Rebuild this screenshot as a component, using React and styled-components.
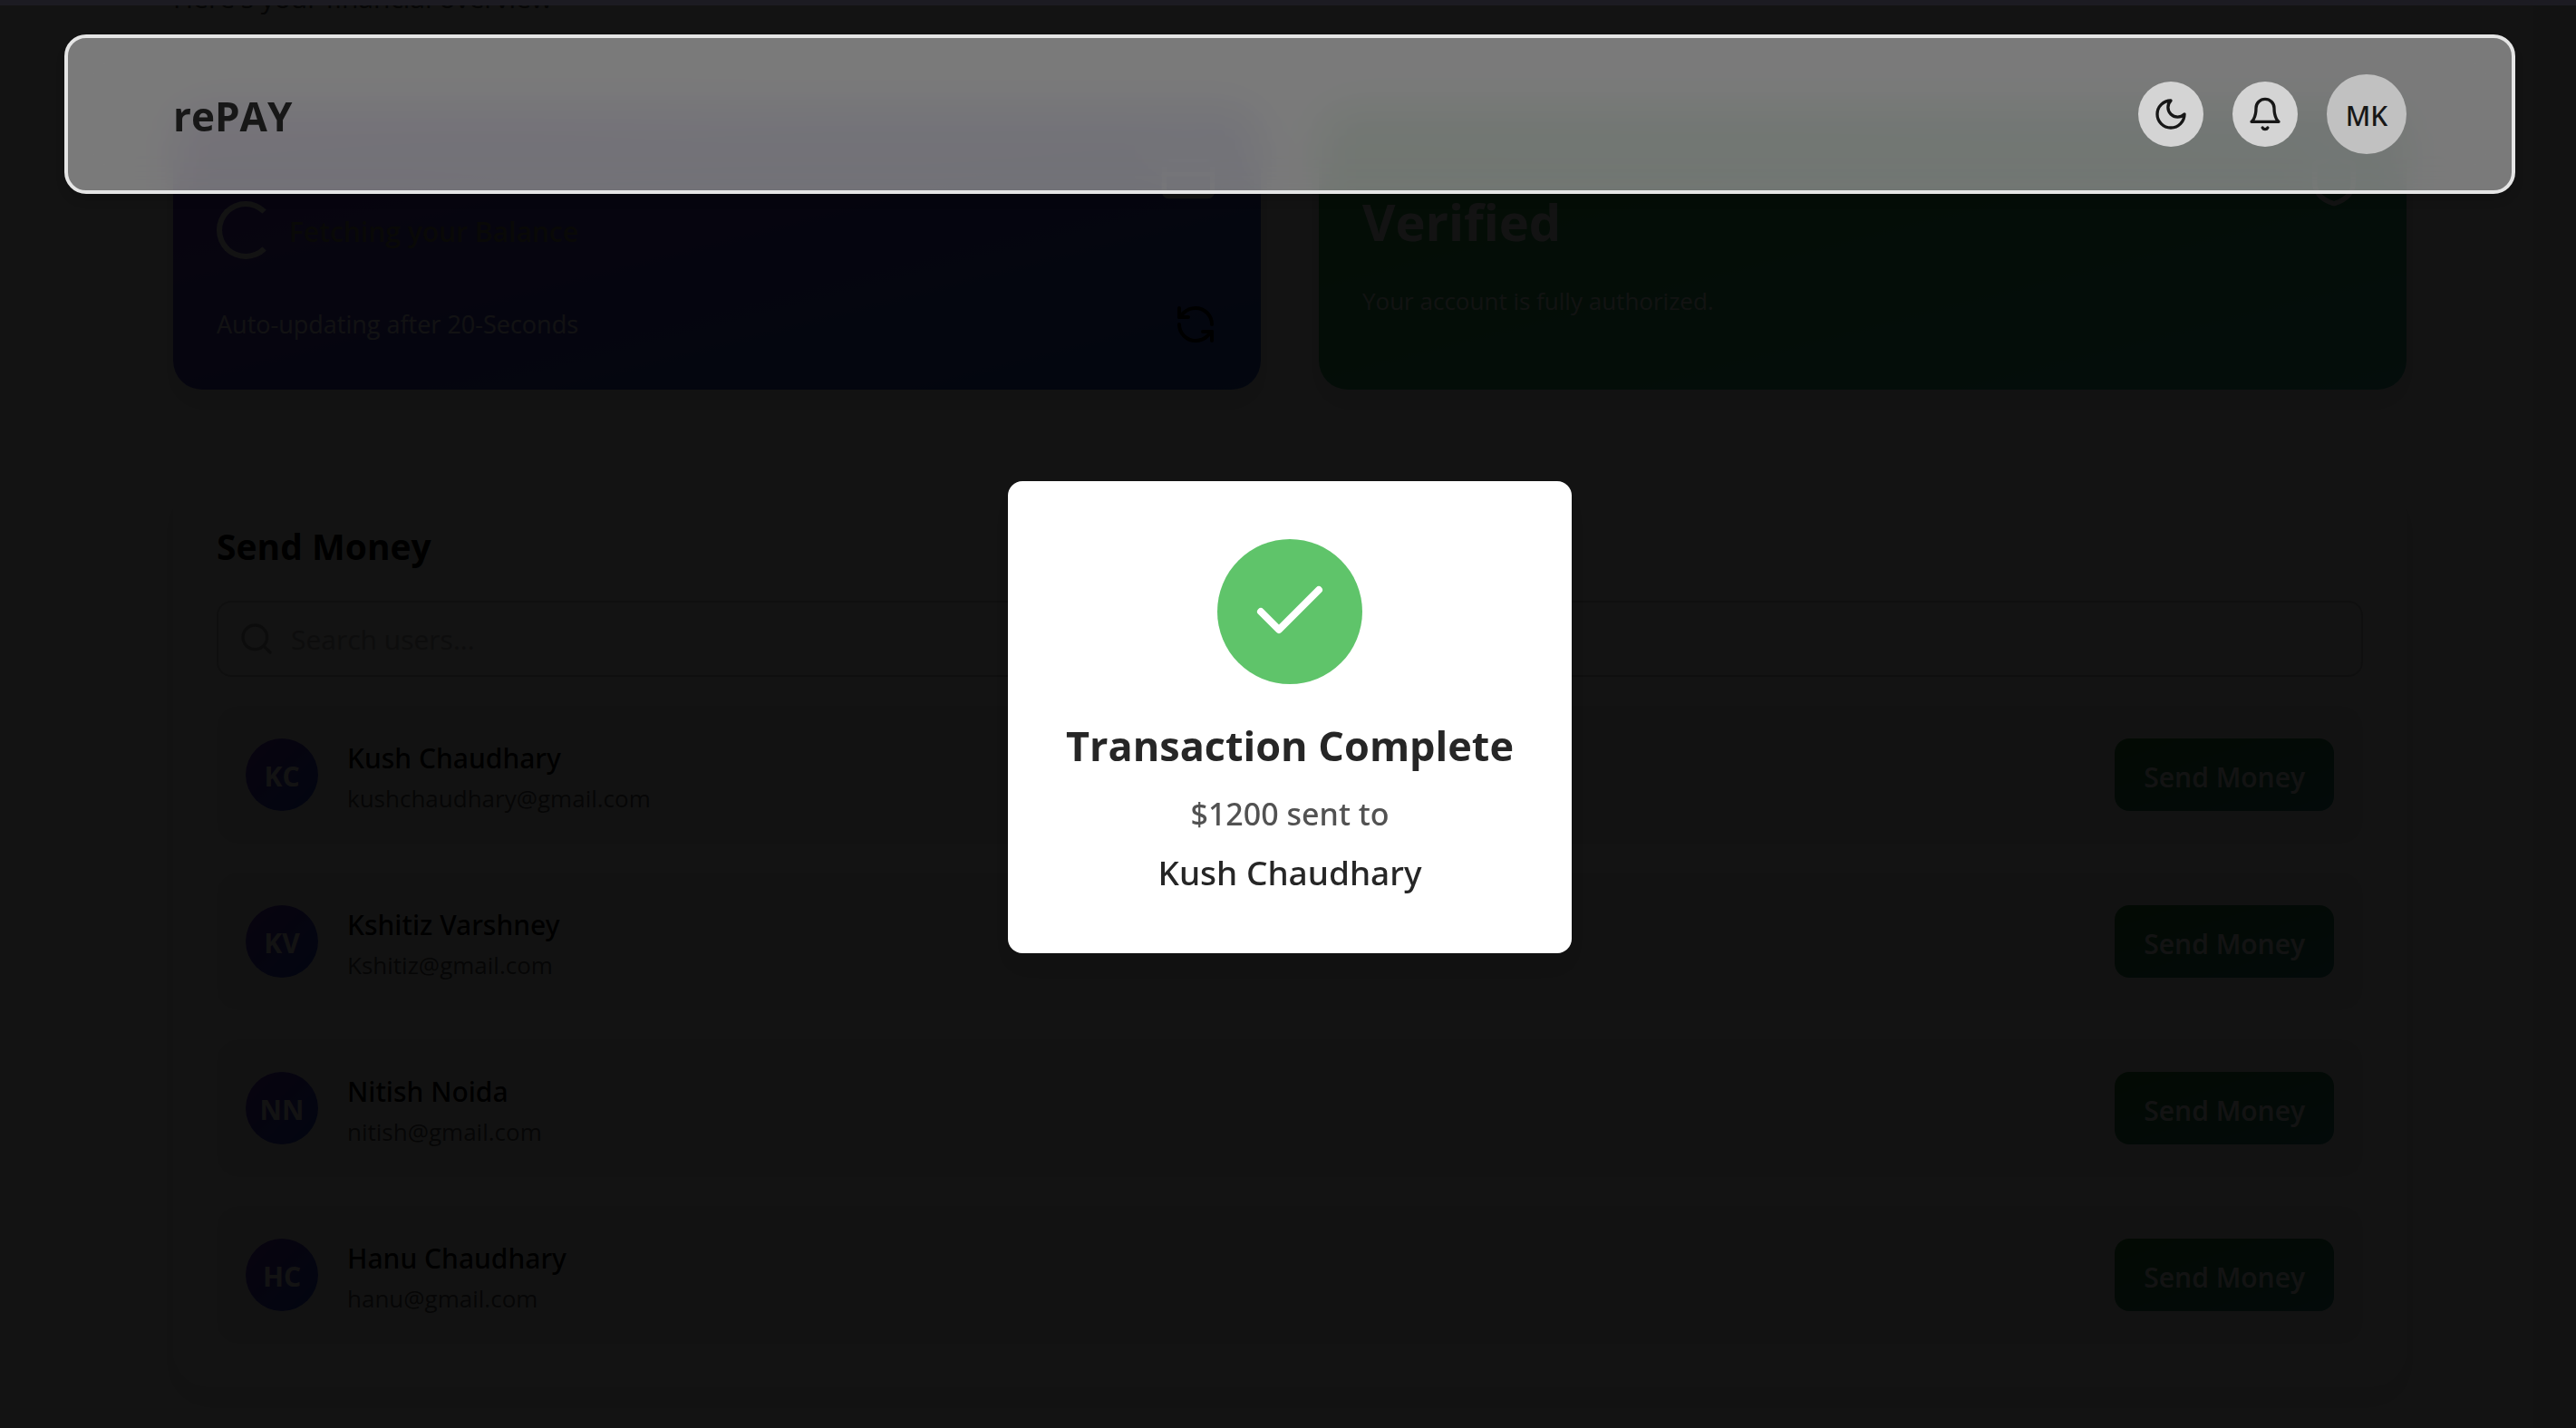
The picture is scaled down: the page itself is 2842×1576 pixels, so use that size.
import React from "react";
import styled, { createGlobalStyle } from "styled-components";

const GlobalStyle = createGlobalStyle`
  *, *::before, *::after { box-sizing: border-box; }
  html, body { margin: 0; height: 100%; }
  body {
    background: #f5f5f5;
    color: #000;
    font-family: "Open Sans", "Noto Sans", sans-serif;
    overflow: hidden;
  }
  #root { height: 100%; }
  h1, h2, h3, p, ul { margin: 0; padding: 0; }
  button, input { font: inherit; }
  button { border: 0; cursor: pointer; }
`;

const mediumFont = `"Noto Sans", "Open Sans", sans-serif`;
const cardShadow = "0 16px 24px -8px rgba(0, 0, 0, 0.08)";

const Icon = styled.svg.attrs({
  viewBox: "0 0 24 24",
  fill: "none",
  stroke: "currentColor",
  strokeWidth: 2,
  strokeLinecap: "round",
  strokeLinejoin: "round",
  "aria-hidden": true,
})`
  display: block;
  flex: none;
  width: ${(p) => p.$size}px;
  height: ${(p) => p.$size}px;
`;

const Screen = styled.div`
  height: 100vh;
  overflow: hidden;
  position: relative;
`;

const WindowEdge = styled.div`
  position: absolute;
  inset: 0 0 auto;
  height: 6px;
  background: #1c1b22;
  z-index: 5;
`;

const Header = styled.header`
  position: absolute;
  top: 38px;
  left: 71px;
  right: 67px;
  z-index: 3;
  display: flex;
  align-items: center;
  justify-content: space-between;
  padding: 40px 116px;
  border: 4px solid #e5e5e5;
  border-radius: 24px;
  background: rgba(255, 255, 255, 0.44);
  backdrop-filter: blur(24px);
  box-shadow: 0 8px 12px -2px rgba(0, 0, 0, 0.15);
  color: #171717;
`;

const Logo = styled.h1`
  padding-top: 4px;
  font-size: 44px;
  line-height: 64px;
  font-weight: 700;
`;

const HeaderActions = styled.div`
  display: flex;
  align-items: center;
  gap: 32px;
`;

const RoundButton = styled.button`
  display: grid;
  place-items: center;
  width: 72px;
  height: 72px;
  padding: 0;
  border-radius: 50%;
  background: #d4d4d4;
  color: #171717;
`;

const ProfileButton = styled(RoundButton)`
  width: 88px;
  height: 88px;
  padding-top: 2px;
  background: #c1c1c1;
  font-family: ${mediumFont};
  font-size: 30px;
  font-weight: 500;
`;

const Page = styled.main`
  margin-top: -30px;
  padding: 0 187px 0 191px;
`;

const Intro = styled.p`
  font-size: 30px;
  line-height: 56px;
  color: #525252;
`;

const Cards = styled.div`
  display: grid;
  grid-template-columns: 1fr 1fr;
  gap: 64px;
  margin-top: 92px;
`;

const Card = styled.section`
  display: flex;
  flex-direction: column;
  height: 312px;
  padding: 48px;
  border-radius: 32px;
  background: linear-gradient(to bottom right, ${(p) => p.$from}, ${(p) => p.$to});
  box-shadow: ${cardShadow};
  color: #fff;
`;

const CardTop = styled.div`
  display: flex;
  justify-content: flex-end;
  height: ${(p) => p.$height}px;
`;

const Loading = styled.div`
  display: flex;
  align-items: center;
  gap: 16px;
  margin-top: 8px;
`;

const LoadingText = styled.span`
  padding-top: 4px;
  color: #747460;
  font-size: 30px;
  line-height: 56px;
  font-weight: 600;
`;

const Spinner = styled.span`
  width: 64px;
  height: 64px;
  border: 6px solid #fff;
  border-right-color: transparent;
  border-radius: 50%;
`;

const CardFoot = styled.div`
  display: flex;
  align-items: center;
  justify-content: space-between;
  margin-top: auto;
`;

const CardNote = styled.p`
  font-size: ${(p) => p.$size}px;
  line-height: 40px;
  opacity: 0.9;
`;

const RefreshButton = styled.button`
  padding: 0;
  background: none;
  color: #000;
`;

const Status = styled.p`
  margin-bottom: 32px;
  font-size: 56px;
  line-height: 72px;
  font-weight: 700;
`;

const Panel = styled.section`
  margin-top: 97px;
  padding: 48px;
  border-radius: 40px;
  background: #fff;
  box-shadow: ${cardShadow};
`;

const PanelTitle = styled.h2`
  font-size: 39px;
  line-height: 56px;
  font-weight: 700;
`;

const Search = styled.label`
  display: flex;
  align-items: center;
  gap: 18px;
  height: 84px;
  margin: 32px 0;
  padding: 0 22px;
  border: 2px solid #c8c8c8;
  border-radius: 16px;
  background: #f5f5f5;
  color: #a3a3a3;
`;

const SearchInput = styled.input`
  flex: 1;
  min-width: 0;
  padding: 2px 0 0;
  border: 0;
  outline: 0;
  background: none;
  font-size: 30px;
  line-height: 48px;
  &::placeholder { color: #adadad; opacity: 1; }
`;

const UserList = styled.ul`
  display: grid;
  gap: 32px;
  list-style: none;
`;

const UserRow = styled.li`
  display: flex;
  align-items: center;
  gap: 32px;
  min-height: 152px;
  padding: 0 32px;
  border-radius: 24px;
  background: #f3f3f3;
`;

const Avatar = styled.span`
  display: grid;
  place-items: center;
  width: 80px;
  height: 80px;
  padding-top: 2px;
  border-radius: 50%;
  background: linear-gradient(to bottom right, #6a2fc4, #2450d4);
  color: #fff;
  font-size: 30px;
  font-weight: 700;
`;

const UserText = styled.div`
  flex: 1;
  padding-top: 4px;
`;

const UserName = styled.h3`
  font-family: ${mediumFont};
  font-size: 30px;
  line-height: 48px;
  font-weight: 500;
`;

const UserMail = styled.p`
  font-size: 26px;
  line-height: 40px;
  color: #525252;
`;

const SendButton = styled.button`
  height: 80px;
  padding: 4px 32px 0;
  border-radius: 16px;
  background: linear-gradient(to bottom right, #2c8834, #2c8a7c);
  color: #fff;
  font-size: 30px;
  font-weight: 600;
`;

const Overlay = styled.div`
  position: absolute;
  inset: 0;
  z-index: 2;
  background: rgba(0, 0, 0, 0.927);
`;

const ModalLayer = styled.div`
  position: absolute;
  inset: 0;
  z-index: 4;
  display: grid;
  place-items: center;
  padding: 6px 0 0 4px;
  pointer-events: none;
`;

const Modal = styled.div`
  display: flex;
  flex-direction: column;
  align-items: center;
  padding: 64px;
  border-radius: 16px;
  background: #fff;
  color: #262626;
  box-shadow: ${cardShadow};
`;

const CheckCircle = styled.span`
  display: grid;
  place-items: center;
  width: 160px;
  height: 160px;
  margin-bottom: 32px;
  border-radius: 50%;
  background: #5fc46a;
  color: #fff;
`;

const ModalTitle = styled.h2`
  font-size: 45px;
  line-height: 72px;
  font-weight: 700;
`;

const ModalAmount = styled.p`
  font-family: ${mediumFont};
  font-size: 34px;
  line-height: 78px;
  font-weight: 500;
  color: #525252;
`;

const ModalName = styled.p`
  font-family: ${mediumFont};
  font-size: 37px;
  line-height: 51px;
  font-weight: 500;
`;

const users = [
  ["KC", "Kush Chaudhary", "kushchaudhary@gmail.com"],
  ["KV", "Kshitiz Varshney", "Kshitiz@gmail.com"],
  ["NN", "Nitish Noida", "nitish@gmail.com"],
  ["HC", "Hanu Chaudhary", "hanu@gmail.com"],
];

export default function App() {
  return (
    <Screen>
      <GlobalStyle />
      <WindowEdge />
      <Header>
        <Logo>rePAY</Logo>
        <HeaderActions>
          <RoundButton aria-label="Dark mode">
            <Icon $size={40}>
              <path d="M12 3a6 6 0 0 0 9 9 9 9 0 1 1-9-9Z" />
            </Icon>
          </RoundButton>
          <RoundButton aria-label="Notifications">
            <Icon $size={40}>
              <path d="M6 8a6 6 0 0 1 12 0c0 7 3 9 3 9H3s3-2 3-9" />
              <path d="M10.3 21a1.94 1.94 0 0 0 3.4 0" />
            </Icon>
          </RoundButton>
          <ProfileButton>MK</ProfileButton>
        </HeaderActions>
      </Header>

      <Page>
        <Intro>Here's your financial overview</Intro>
        <Cards>
          <Card $from="#7036cc" $to="#285acc">
            <CardTop $height={48}>
              <Icon $size={64}>
                <rect x="2" y="4" width="20" height="15" rx="2" />
                <path d="M2 10h20" />
              </Icon>
            </CardTop>
            <Loading>
              <Spinner />
              <LoadingText>Fetching your Balance</LoadingText>
            </Loading>
            <CardFoot>
              <CardNote $size={27}>Auto-updating after 20-Seconds</CardNote>
              <RefreshButton aria-label="Refresh balance">
                <Icon $size={48}>
                  <path d="M21 12a9 9 0 0 0-9-9 9.75 9.75 0 0 0-6.74 2.74L3 8" />
                  <path d="M3 3v5h5" />
                  <path d="M3 12a9 9 0 0 0 9 9 9.75 9.75 0 0 0 6.74-2.74L21 16" />
                  <path d="M16 16h5v5" />
                </Icon>
              </RefreshButton>
            </CardFoot>
          </Card>
          <Card $from="#34a840" $to="#34a890">
            <CardTop $height={42}>
              <Icon $size={64}>
                <path d="M20 13c0 5-3.5 7.5-7.66 8.95a1 1 0 0 1-.67-.01C7.5 20.5 4 18 4 13V6a1 1 0 0 1 1-1c2 0 4.5-1.2 6.24-2.72a1.17 1.17 0 0 1 1.52 0C14.51 3.81 17 5 19 5a1 1 0 0 1 1 1z" />
              </Icon>
            </CardTop>
            <Status>Verified</Status>
            <CardNote $size={26}>Your account is fully authorized.</CardNote>
          </Card>
        </Cards>

        <Panel>
          <PanelTitle>Send Money</PanelTitle>
          <Search>
            <Icon $size={40}>
              <circle cx="11" cy="11" r="8" />
              <path d="m21 21-4.3-4.3" />
            </Icon>
            <SearchInput type="text" placeholder="Search users..." aria-label="Search users" />
          </Search>
          <UserList>
            {users.map(([initials, name, mail]) => (
              <UserRow key={mail}>
                <Avatar>{initials}</Avatar>
                <UserText>
                  <UserName>{name}</UserName>
                  <UserMail>{mail}</UserMail>
                </UserText>
                <SendButton>Send Money</SendButton>
              </UserRow>
            ))}
          </UserList>
        </Panel>
      </Page>

      <Overlay />
      <ModalLayer>
        <Modal role="dialog" aria-modal="true" aria-labelledby="modal-title">
          <CheckCircle>
            <Icon $size={96}>
              <path d="M20 6 9 17l-5-5" />
            </Icon>
          </CheckCircle>
          <ModalTitle id="modal-title">Transaction Complete</ModalTitle>
          <ModalAmount>$1200 sent to</ModalAmount>
          <ModalName>Kush Chaudhary</ModalName>
        </Modal>
      </ModalLayer>
    </Screen>
  );
}
